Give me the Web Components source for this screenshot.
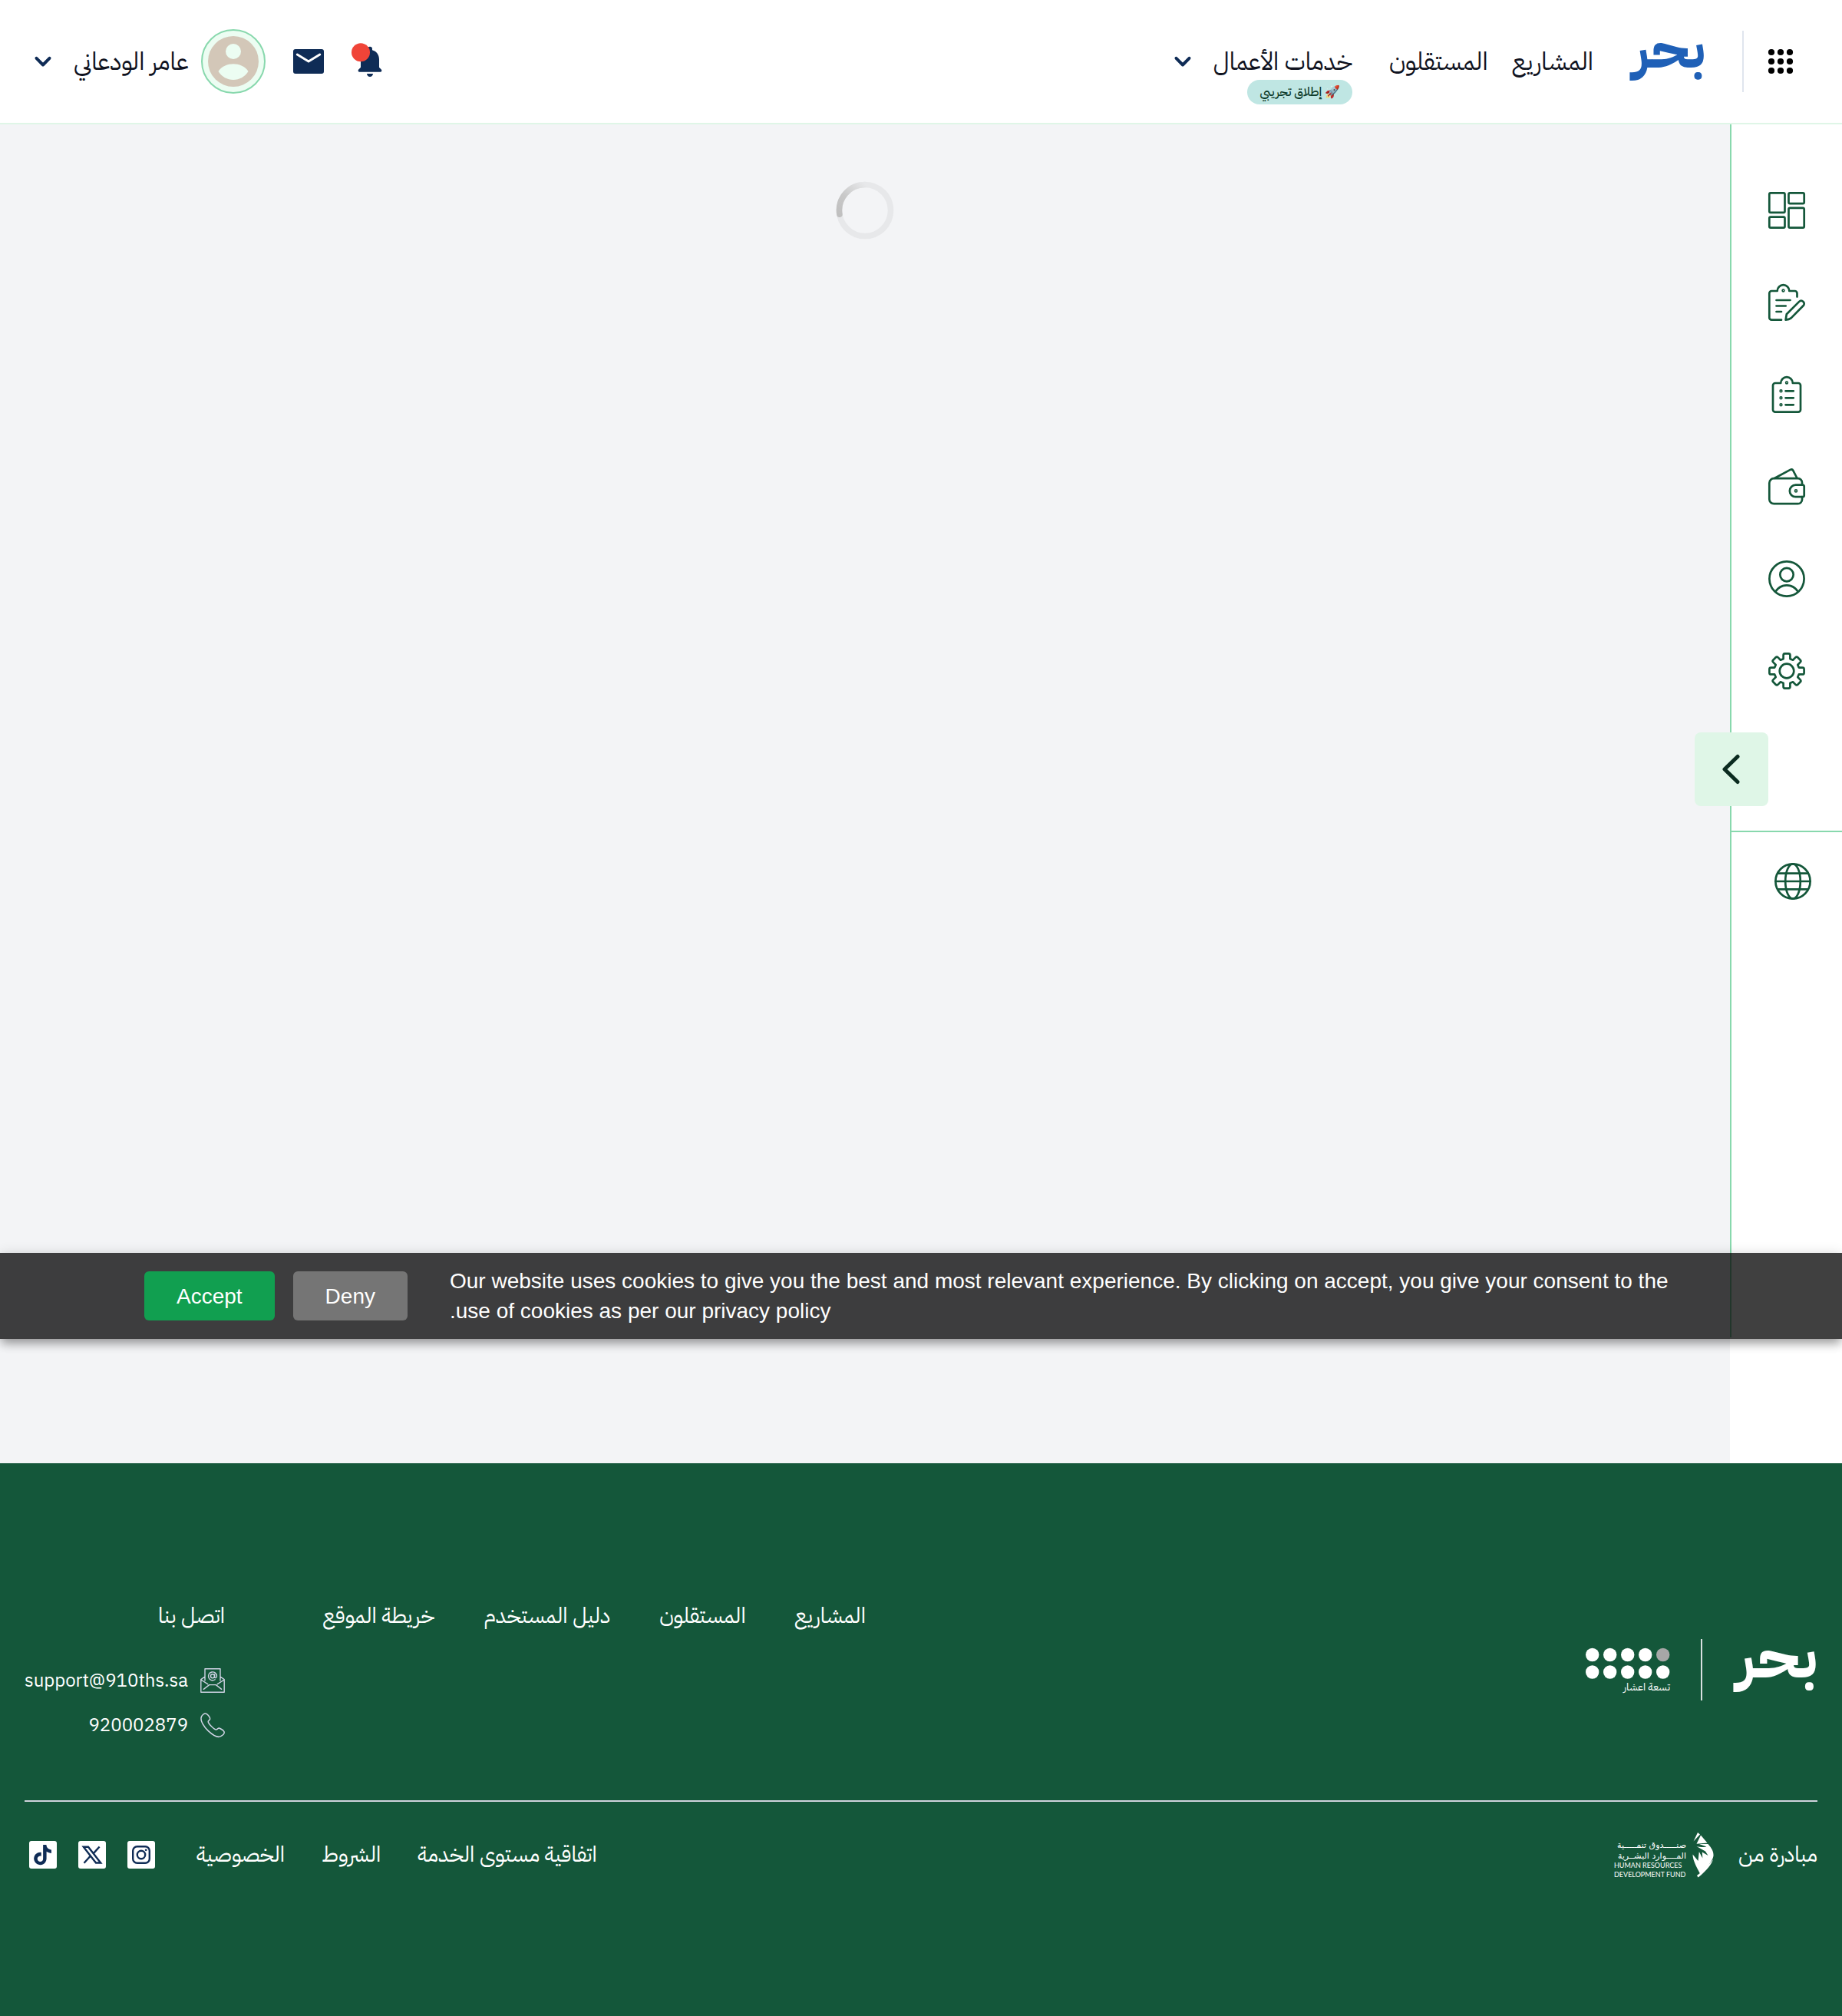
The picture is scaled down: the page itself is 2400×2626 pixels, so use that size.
<!DOCTYPE html>
<html lang="ar" dir="rtl">
<head>
<meta charset="utf-8">
<title>بحر</title>
<style>
html{--green:#14573a;--mint:#88d8ad;--pale:#dff6e7;--navy:#0f2c56;--surface:#f3f4f6;font-family:"IBM Plex Sans Arabic","Noto Sans Arabic","Noto Sans","DejaVu Sans",sans-serif}
body{margin:0;min-height:100vh;display:flex;flex-direction:column;background:#fff;color:#10131f}
</style>
</head>
<body>
<app-header></app-header>
<app-shell>
  <loading-spinner></loading-spinner>
  <app-sidebar slot="side"></app-sidebar>
  <cookie-banner slot="banner">Our website uses cookies to give you the best and most relevant experience. By clicking on accept, you give your consent to the use of cookies as per our privacy policy.</cookie-banner>
</app-shell>
<app-footer></app-footer>
<script>
const define = (name, html) => {
  const t = document.createElement('template');
  t.innerHTML = html;
  customElements.define(name, class extends HTMLElement {
    constructor() {
      super();
      this.attachShadow({mode: 'open'}).append(t.content.cloneNode(true));
    }
  });
};

/* The gear outline is one tooth turned eight times round the centre. */
const gear = (() => {
  const turn = (x, y, k) => {
    const a = k * Math.PI / 4, c = Math.cos(a), s = Math.sin(a);
    return (24 + x * c - y * s).toFixed(2) + ' ' + (24 + x * s + y * c).toFixed(2);
  };
  let d = '';
  for (let k = 0; k < 8; k++) {
    d += (k ? 'L' : 'M') + turn(-4.4, -15.8, k) + 'L' + turn(-4.4, -20.5, k) + 'Q' + turn(-4.4, -22.6, k) + ' ' + turn(-2.4, -22.6, k)
      + 'L' + turn(2.4, -22.6, k) + 'Q' + turn(4.4, -22.6, k) + ' ' + turn(4.4, -20.5, k) + 'L' + turn(4.4, -15.8, k);
  }
  return d + 'Z';
})();

const ICONS = {
  board: '<g class="s"><rect x="1.3" y="1.3" width="20.2" height="25.6" rx="1.6"/><rect x="1.3" y="32.7" width="20.2" height="14" rx="1.6"/><rect x="26.5" y="1.3" width="20.2" height="13.8" rx="1.6"/><rect x="26.5" y="20.9" width="20.2" height="25.8" rx="1.6"/></g>',
  edit: '<g class="s"><path d="M17 46.7H4.3a3 3 0 0 1-3-3V12a3 3 0 0 1 3-3h7.4a7.8 7.8 0 0 1 15.6 0h7.2a3 3 0 0 1 3 3v4.6M10.5 21h18M10.5 28.5h12.2M10.5 36H17"/><path d="M22.6 46.6l1.2-7.4 16.4-16.3c1.7-1.7 3.8-1.4 5.3 0s1.7 3.6 0 5.3L29.6 44.4c-1.9 1.4-4.3 2-7 2.2z"/></g><circle class="s t" cx="19.5" cy="8.5" r="1.4"/>',
  list: '<g class="s"><path d="M16.2 9H9a3 3 0 0 0-3 3v31.7a3 3 0 0 0 3 3h30a3 3 0 0 0 3-3V12a3 3 0 0 0-3-3h-7.2a7.8 7.8 0 0 0-15.6 0zM22.5 19.3h10.3M22.5 28.3h10.3M22.5 37.3h10.3"/></g><g class="s t"><circle cx="24" cy="8.5" r="1.4"/><circle cx="16.5" cy="19.3" r="1.4"/><circle cx="16.5" cy="28.3" r="1.4"/><circle cx="16.5" cy="37.3" r="1.4"/></g>',
  wallet: '<g class="s"><path d="M44 21.7v-3a5.5 5.5 0 0 0-5.5-5.5H7.3a6 6 0 0 0-6 6v21a6 6 0 0 0 6 6H38.5a5.5 5.5 0 0 0 5.5-5.5V37.2"/><path d="M8.5 12.8L28.6 1.9c1.7-.8 2.900-.5 3.700 1l5 9.600"/><path d="M35.600 21.700h9.300a1.800 1.800 0 0 1 1.800 1.800v11.900a1.800 1.800 0 0 1-1.800 1.800h-9.300a7.700 7.700 0 0 1 0-15.500z"/></g><circle class="s t" cx="36" cy="29.400" r="1.500"/>',
  user: '<g class="s"><circle cx="24" cy="24" r="22.600"/><circle cx="24" cy="18.600" r="8.700"/><path d="M9.500 40.500c3.200-5 8.400-8.200 14.500-8.200s11.300 3.200 14.500 8.200"/></g>',
  gear: `<g class="s"><path d="${gear}"/><circle cx="24" cy="24" r="9.300"/></g>`,
  globe: '<g class="s"><circle cx="24" cy="24" r="22.600"/><ellipse cx="24" cy="24" rx="9.800" ry="22.600"/><path d="M4.500 13.700h39M1.500 24h45M4.500 34.300h39"/></g>',
  chevron: '<path d="M15.500 19.800L24 28.500l8.500-8.700" fill="none" stroke="currentColor" stroke-width="4" stroke-linecap="round" stroke-linejoin="round"/>',
  back: '<path d="M32 8L15 24.500 32 41" transform="translate(0 -.5)" fill="none" stroke="currentColor" stroke-width="5" stroke-linecap="round" stroke-linejoin="round"/>',
  apps: [12, 24, 36].map(y => [12, 24, 36].map(x => `<circle cx="${x}" cy="${y}" r="4.100"/>`).join('')).join(''),
  mail: '<path d="M7 8h34a3 3 0 0 1 3 3v26a3 3 0 0 1-3 3H7a3 3 0 0 1-3-3V11a3 3 0 0 1 3-3z"/><path d="M9.300 15L24 24l14.700-9" fill="none" stroke="#fff" stroke-width="3" stroke-linecap="round" stroke-linejoin="round"/>',
  bell: '<path d="M24 4.800a3 3 0 0 1 3 3v1.400c5.400 1.300 9 6.200 9 12v10.500l3 3c.8 1 .3 3-1.500 3h-27c-1.800 0-2.300-2-1.500-3l3-3V21.200c0-5.800 3.600-10.700 9-12V7.800a3 3 0 0 1 3-3zM20 40h8c0 2.200-1.700 4-4 4s-4-1.800-4-4z"/><circle cx="12" cy="12.200" r="12" fill="#f04438"/>',
  instagram: '<rect x="6" y="6" width="36" height="36" rx="3" fill="#fff"/><g fill="none" stroke="currentColor" stroke-width="2.400"><rect x="13.200" y="13.200" width="21.600" height="21.600" rx="5.500"/><circle cx="24" cy="24" r="5.200"/></g><circle cx="30.200" cy="17.800" r="1.400"/>',
  x: '<rect x="6" y="6" width="36" height="36" rx="3" fill="#fff"/><path d="M12.800 13.700H19l16.200 20.800H29zM33.600 13.500L25.400 22.600M13.500 34.700l9-10" fill="none" stroke="currentColor" stroke-width="2.400"/>',
  tiktok: '<rect x="6" y="6" width="36" height="36" rx="3" fill="#fff"/><path transform="translate(10.500 11) scale(1.090)" d="M12.525.02c1.310-.02 2.610-.01 3.910-.02.08 1.530.63 3.090 1.750 4.170 1.120 1.110 2.700 1.620 4.240 1.790v4.030c-1.440-.05-2.890-.35-4.200-.97-.57-.26-1.100-.59-1.620-.93-.01 2.920.01 5.840-.02 8.750-.08 1.400-.54 2.790-1.350 3.940-1.310 1.920-3.580 3.170-5.910 3.210-1.430.08-2.860-.31-4.080-1.030-2.020-1.190-3.440-3.370-3.650-5.710-.02-.5-.03-1-.01-1.490.18-1.900 1.120-3.720 2.580-4.960 1.660-1.440 3.980-2.130 6.150-1.720.02 1.480-.04 2.960-.04 4.440-.99-.32-2.150-.23-3.020.37-.63.41-1.110 1.040-1.360 1.750-.21.51-.15 1.070-.14 1.610.24 1.640 1.820 3.020 3.500 2.870 1.120-.01 2.190-.66 2.770-1.610.19-.33.4-.67.41-1.060.1-1.790.06-3.570.07-5.360.01-4.030-.01-8.050.02-12.070z"/>',
  letter: '<g fill="none" stroke="currentColor" stroke-width="2.100" stroke-linejoin="round" stroke-linecap="round"><path d="M9 24V1.200h30V24M9 16.500L1.200 22v24.800h45.600V22L39 16.500M1.200 22.500L14.500 31M46.800 22.500L33.500 31M6.500 41l11-8.500h13L41.500 41"/><circle cx="24" cy="15.500" r="3.800"/><path d="M27.800 11.800v5.200c0 3 4.400 2.600 4.400-1.500a8.200 8.200 0 1 0-3.500 6.700"/></g>',
  phone: '<path d="M10.500 1.500c-2.300-.8-7 2.500-8.600 6.800C-.5 16 7.500 28 15.500 35.500 23 42.500 33.500 49.500 40 46c4.500-2.400 7.300-5.600 6.700-8.500-1.200-3.500-6.500-6-9-7.200-3.200-1.300-4.700 3.200-7.200 2.700-4.500-1-14.700-11.500-15.200-15.500-.3-2.500 4.700-3.400 3.700-6.500C18 7.500 14 2.500 10.500 1.500z" fill="none" stroke="currentColor" stroke-width="2.300"/>'
};

customElements.define('app-icon', class extends HTMLElement {
  connectedCallback() {
    if (this.shadowRoot) return;
    this.attachShadow({mode: 'open'}).innerHTML = `
      <style>:host{display:block;width:48px;height:48px;flex:none}svg{display:block;width:100%;height:100%;overflow:visible;fill:currentColor}
      .s{fill:none;stroke:currentColor;stroke-width:2.700;stroke-linecap:round;stroke-linejoin:round}.t{stroke-width:1.600}</style>
      <svg viewBox="0 0 48 48" aria-hidden="true">${ICONS[this.getAttribute('name')]}</svg>`;
  }
});

define('app-header', `
<style>
:host{display:flex;align-items:center;justify-content:space-between;height:160px;padding-inline:56px 32px;border-bottom:2px solid var(--pale);background:#fff;font-size:32px;line-height:48px}
.group,nav,.account{display:flex;align-items:center}
button{all:unset;cursor:pointer;color:var(--navy)}
.apps{color:#000;padding-inline-end:24px;margin-inline-end:48px;border-inline-end:2px solid #e0e5ee;height:80px;display:flex;align-items:center}
a{color:#10131f;text-decoration:none;white-space:nowrap}
.brand{display:block;margin-inline-end:48px}
.brand svg{display:block;width:98px;height:80px;overflow:visible}
nav{gap:32px}
.more{display:flex;align-items:center;gap:16px;margin-inline-start:16px;position:relative}
.badge{position:absolute;inset-inline-start:0;top:48px;height:32px;box-sizing:border-box;padding:0 16px;border-radius:16px;background:#bfe6e3;color:#0c3a2a;font-size:16px;font-weight:500;line-height:32px;white-space:nowrap}
.tools{display:flex;gap:32px;margin-inline-end:32px}
.account{gap:16px}
.avatar{width:80px;height:80px;border:2px solid var(--mint);border-radius:50%;background:#ecfdf2;display:grid;place-items:center}
.avatar svg{width:66px;height:66px}
</style>
<div class="group">
  <button class="apps" aria-label="التطبيقات"><app-icon name="apps"></app-icon></button>
  <a class="brand" href="#"><svg viewBox="0 0 98 80"><text x="98" y="48" direction="rtl" font-size="72" font-weight="700" fill="#1f60b7">بحر</text></svg></a>
  <nav><a href="#">المشاريع</a><a href="#">المستقلون</a>
    <div class="more"><a href="#">خدمات الأعمال</a><button aria-label="المزيد"><app-icon name="chevron"></app-icon></button><span class="badge">🚀 إطلاق تجريبي</span></div>
  </nav>
</div>
<div class="group">
  <div class="tools"><button aria-label="الإشعارات"><app-icon name="bell"></app-icon></button><button aria-label="الرسائل"><app-icon name="mail"></app-icon></button></div>
  <div class="account">
    <div class="avatar"><svg viewBox="0 0 66 66"><circle cx="33" cy="33" r="33" fill="#d3c7b8"/><circle cx="33" cy="20" r="10" fill="#ecfdf2"/><path d="M13.500 46C17 39.500 26 36.300 33 36.300S49 39.500 52.500 46C48 53 41 57 33 57S18 53 13.500 46z" fill="#ecfdf2"/></svg></div>
    <span>عامر الودعاني</span>
    <button aria-label="قائمة الحساب"><app-icon name="chevron"></app-icon></button>
  </div>
</div>`);

define('app-shell', `
<style>
:host{display:flex;flex:1;position:relative}
main{flex:1;background:var(--surface);display:flex;flex-direction:column;align-items:center;padding-top:74px}
</style>
<slot name="side"></slot><main><slot></slot></main><slot name="banner"></slot>`);

define('loading-spinner', `
<style>:host{display:block;width:76px;height:76px}svg{display:block;width:100%}</style>
<svg viewBox="0 0 76 76" fill="none" stroke-width="7.600" role="img" aria-label="جار التحميل">
<defs><linearGradient id="g" x1="4" y1="44" x2="38" y2="4" gradientUnits="userSpaceOnUse"><stop offset="0" stop-color="#bfbfbf"/><stop offset=".45" stop-color="#c8c8c8"/><stop offset="1" stop-color="#e7e8ea"/></linearGradient></defs>
<circle cx="38" cy="38" r="33.500" stroke="#e7e8ea"/><path d="M4.900 43.200A33.500 33.500 0 0 1 38 4.500" stroke="url(#g)" stroke-linecap="round"/></svg>`);

define('app-sidebar', `
<style>
:host{display:block;width:146px;flex:none;padding-bottom:164px;box-sizing:border-box;background:#fff}
aside{height:100%;box-sizing:border-box;border-inline-end:2px solid var(--mint);color:var(--green);position:relative}
nav{display:flex;flex-direction:column;align-items:center;gap:72px;padding:88px 0 184px;border-bottom:2px solid var(--mint)}
a{color:inherit}
.lang{display:block;margin:40px 40px 0 0;width:48px}
button{position:absolute;top:792px;inset-inline-end:-48px;width:96px;height:96px;border:0;border-radius:8px;background:var(--pale);color:#0b2b20;display:grid;place-items:center;padding:0}
</style>
<aside>
<nav>
<a href="#" aria-label="لوحة التحكم"><app-icon name="board"></app-icon></a>
<a href="#" aria-label="العروض"><app-icon name="edit"></app-icon></a>
<a href="#" aria-label="المشاريع"><app-icon name="list"></app-icon></a>
<a href="#" aria-label="المحفظة"><app-icon name="wallet"></app-icon></a>
<a href="#" aria-label="الملف الشخصي"><app-icon name="user"></app-icon></a>
<a href="#" aria-label="الإعدادات"><app-icon name="gear"></app-icon></a>
</nav>
<a class="lang" href="#" aria-label="اللغة"><app-icon name="globe"></app-icon></a>
<button aria-label="توسيع القائمة"><app-icon name="back"></app-icon></button>
</aside>`);

define('cookie-banner', `
<style>
:host{position:absolute;inset-inline:0;bottom:162px;box-sizing:border-box;height:112px;padding-inline:188px;display:flex;align-items:center;background:rgba(0,0,0,.75);color:#fff;font:28px/39px "Liberation Sans",Arial,sans-serif;box-shadow:0 8px 12px -2px rgba(0,0,0,.3),0 2px 16px rgba(0,0,0,.16)}
p{flex:1;margin:0;margin-inline-end:55px;text-align:left}
.actions{display:flex;gap:24px}
button{border:0;border-radius:6px;height:64px;padding:0 42px;font:inherit;color:#fff;background:#757575}
.ok{background:#119f50}
</style>
<p><slot></slot></p>
<div class="actions"><button>Deny</button><button class="ok">Accept</button></div>`);

define('app-footer', `
<style>
:host{display:block;background:var(--green);color:#fff;padding:175px 32px 180px;font-size:28px;line-height:48px}
a{color:inherit;text-decoration:none;white-space:nowrap}
.top,.bottom,.brands,.links,nav,.fund,.social{display:flex}
.top{justify-content:space-between;align-items:flex-start;padding-bottom:74px;border-bottom:2px solid #cfd3dc}
.brands{align-items:center;height:80px;margin-top:54px;gap:40px}
.brand svg{width:110px;height:80px}
.rule{width:2px;height:80px;background:#d9e0e0}
.tenths{width:110px;height:60px}
.links{gap:128px}
nav{gap:64px}
.contact{display:grid;gap:10px}
.contact a{display:flex;align-items:center;gap:16px;font-size:24px}
.contact app-icon{width:32px;height:32px;color:#cfd3e4}
.contact .first{margin-top:26px}
.bottom{justify-content:space-between;align-items:center;margin-top:39px}
.fund{align-items:center;gap:34px}
.fund svg{width:130px;height:60px}
.bottom nav{gap:48px;align-items:center}
.social{gap:16px;color:var(--navy)}
svg{display:block;overflow:visible}
</style>
<div class="top">
  <div class="brands">
    <a class="brand" href="#"><svg viewBox="0 0 110 80"><text x="110" y="50" direction="rtl" font-size="80" font-weight="700" fill="#fff">بحر</text></svg></a><span class="rule"></span>
    <svg class="tenths" viewBox="0 0 110 60" fill="#fff">${[0,1].map(r => [0,1,2,3,4].map(c => `<circle cx="${8.7 + c * 23}" cy="${10.500 + r * 22.500}" r="8.700"${r === 0 && c === 4 ? ' fill="#a7a7a7"' : ''}/>`).join('')).join('')}<text x="110" y="57" font-size="14" direction="rtl">تسعة اعشار</text></svg>
  </div>
  <div class="links">
    <nav><a href="#">المشاريع</a><a href="#">المستقلون</a><a href="#">دليل المستخدم</a><a href="#">خريطة الموقع</a></nav>
    <div class="contact"><span>اتصل بنا</span>
      <a class="first" href="mailto:support@910ths.sa"><app-icon name="letter"></app-icon>support@910ths.sa</a>
      <a href="tel:920002879"><app-icon name="phone"></app-icon>920002879</a></div>
  </div>
</div>
<div class="bottom">
  <div class="fund"><span>مبادرة من</span>
    <svg viewBox="-1 -1 130 60" fill="#fff"><path d="M110 0l3 2.500-8.500 9zM114 3.500l8.500 10-14 1.200zM123.500 15c4.500 5 7.500 10 7 15.500-1.500 8-9 15-17.500 23-3-6-9.500-16.500-9.500-25l7 8.500 1.300-12 4.500 8.500-.5-8 7.700 4.500-3.500-5.500-11.500-6.500c5 1 9 1.500 13 .5l-9.500-3.500zM130 35c-1.500 5.500-8 14.500-19.500 23.500l-1.500-2.500c8-6 16-13.500 21-21z"/>
    <g font-family="DejaVu Sans" font-size="11" direction="rtl"><text x="95" y="20">صنـــــدوق تنمـــــية</text><text x="95" y="34">المــــوارد البشــرية</text></g>
    <g font-family="Lato,sans-serif" font-size="9" direction="ltr"><text x="1" y="46">HUMAN RESOURCES</text><text x="1" y="58">DEVELOPMENT FUND</text></g></svg>
  </div>
  <nav><a href="#">اتفاقية مستوى الخدمة</a><a href="#">الشروط</a><a href="#">الخصوصية</a>
    <div class="social"><a href="#" aria-label="Instagram"><app-icon name="instagram"></app-icon></a><a href="#" aria-label="X"><app-icon name="x"></app-icon></a><a href="#" aria-label="TikTok"><app-icon name="tiktok"></app-icon></a></div>
  </nav>
</div>`);
</script>
</body>
</html>
